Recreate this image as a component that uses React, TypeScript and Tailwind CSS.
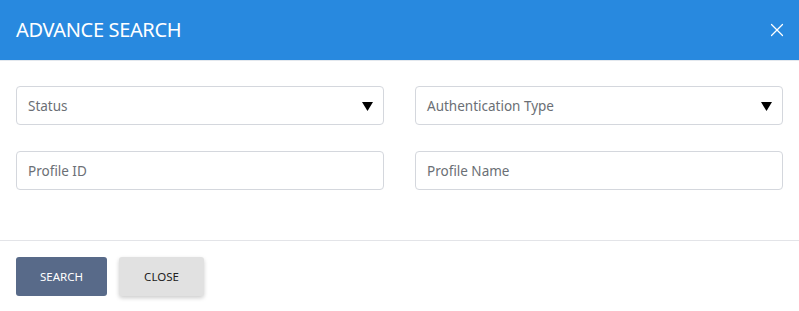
import { X } from "lucide-react";

function SelectBox({ label }: { label: string }) {
  return (
    <div className="flex h-[39px] items-center justify-between rounded-[4px] border border-[#d4d7dd] bg-white pl-[11px] pr-[10px]">
      <span className="pt-[2px] text-[13.5px] text-[#6b6f75]">{label}</span>
      <svg width="11" height="9" viewBox="0 0 11 9" className="mt-[1px]">
        <path d="M0 0 H11 L5.5 9 Z" fill="#000" />
      </svg>
    </div>
  );
}

function TextBox({ placeholder }: { placeholder: string }) {
  return (
    <input
      placeholder={placeholder}
      className="h-[39px] w-full rounded-[4px] border border-[#d4d7dd] bg-white px-[11px] pt-[1px] text-[13.5px] text-[#333] outline-none placeholder:text-[#6b6f75]"
    />
  );
}

export default function App() {
  return (
    <div className="flex h-[311px] w-[799px] flex-col bg-white font-['Noto_Sans',sans-serif]">
      {/* Header */}
      <div className="flex h-[61px] shrink-0 items-center justify-between border-b border-[#e3e8ee] bg-[#2889df] pl-[16px] pr-[11px]">
        <h2 className="text-[20px] font-normal tracking-[-0.35px] text-white">ADVANCE SEARCH</h2>
        <X className="h-[22px] w-[22px] text-white" strokeWidth={1.3} />
      </div>

      {/* Form */}
      <div className="grid grid-cols-2 gap-x-[31px] gap-y-[26px] px-[16px] pt-[25px] pb-[50px]">
        <SelectBox label="Status" />
        <SelectBox label="Authentication Type" />
        <TextBox placeholder="Profile ID" />
        <TextBox placeholder="Profile Name" />
      </div>

      {/* Footer */}
      <div className="flex gap-[12px] border-t border-[#e3e4e8] px-[16px] pt-[16px]">
        <button className="h-[39px] w-[91px] rounded-[3px] bg-[#586a89] text-[11.5px] text-white">SEARCH</button>
        <button className="h-[39px] w-[85px] rounded-[3px] bg-[#e1e1e1] text-[11.5px] text-[#222] shadow-[0_2px_4px_rgba(0,0,0,0.2)]">
          CLOSE
        </button>
      </div>
    </div>
  );
}
